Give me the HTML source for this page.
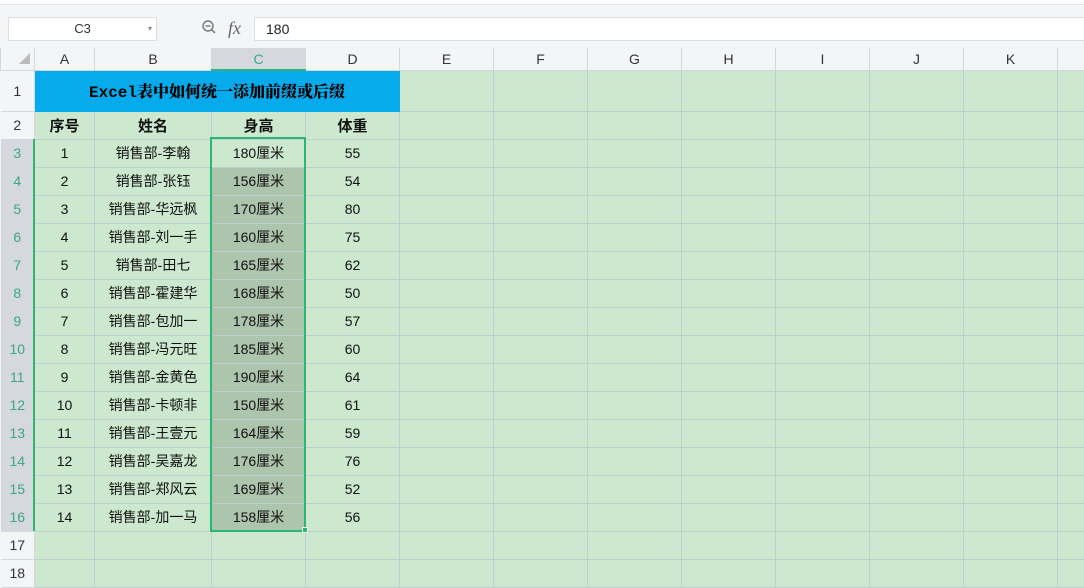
<!DOCTYPE html>
<html><head><meta charset="utf-8"><style>
*{margin:0;padding:0;box-sizing:border-box}
body{width:1084px;height:570px;overflow:hidden;background:#f4f5f7;font-family:"Liberation Sans","Noto Sans CJK SC",sans-serif;position:relative}
.topbar{position:absolute;left:0;top:0;width:1084px;height:5px;background:#fff;border-bottom:1px solid #e4e6ea}
.namebox{position:absolute;left:8px;top:17px;width:149px;height:24px;background:#fff;border:1px solid #dcdfe3;font-size:13px;color:#333;text-align:center;line-height:22px}
.namebox span{position:absolute;right:4px;top:0;font-size:8px;color:#888}
.fx{position:absolute;left:228px;top:18px;font-family:"Liberation Serif",serif;font-style:italic;font-size:18px;color:#666}
.mag{position:absolute;left:202px;top:20px;width:14px;height:14px}
.fbox{position:absolute;left:254px;top:17px;width:840px;height:24px;background:#fff;border:1px solid #dcdfe3;font-size:14px;line-height:22px;padding-left:11px;color:#222}
table{position:absolute;left:0;top:48px;border-collapse:collapse;table-layout:fixed;width:1100px}
td{border:1px solid #bdcfd0;text-align:center;font-size:14px;color:#111;overflow:hidden;white-space:nowrap;background:#cce8cf;height:28px;padding:0}
tr.h td{background:#f4f5f7;color:#333;height:22px;border-color:#d4d7dc;border-top:none;font-size:14px}
td.rh{background:#f4f5f7;color:#333;border-color:#d4d7dc;border-left:none;font-size:14px}
td.rs{background:#d5d8de;color:#3aa87a}
tr.h td.cs{background:#d5d8de;color:#3aa87a;border-bottom:2px solid #2fb37a}
td.t{background:#07abeb;border-color:#07abeb;font-family:"Liberation Mono","Noto Serif CJK SC",serif;font-weight:900;font-size:16px;height:41px;color:#000}
td.b{font-weight:bold;font-size:15px;font-family:"Liberation Sans","Noto Sans CJK SC",sans-serif}
td.s{background:#adc4ad}
.sel{position:absolute;left:210px;top:137px;width:96px;height:395px;border:2px solid #2ab673}
.hd{position:absolute;left:302px;top:527px;width:6px;height:6px;background:#2ab673;border:1px solid #fff}
.lb{position:absolute;left:33px;top:139px;width:2px;height:392px;background:#2ab673}
</style></head><body>
<div class="topbar"></div>
<div class="namebox">C3<span>▾</span></div>
<svg class="mag" viewBox="0 0 14 14"><circle cx="6" cy="6" r="5" fill="none" stroke="#777" stroke-width="1.4"/><line x1="3.5" y1="6" x2="8.5" y2="6" stroke="#777" stroke-width="1.4"/><line x1="9.6" y1="9.6" x2="13" y2="13" stroke="#777" stroke-width="1.5"/></svg>
<div class="fx">fx</div>
<div class="fbox">180</div>
<table>
<colgroup><col style="width:34px"><col style="width:60px"><col style="width:117px"><col style="width:94px"><col style="width:94px"><col style="width:94px"><col style="width:94px"><col style="width:94px"><col style="width:94px"><col style="width:94px"><col style="width:94px"><col style="width:94px"><col style="width:43px"></colgroup>
<tr class="h"><td style="position:relative"><svg width="14" height="12" style="position:absolute;left:16px;top:5px"><polygon points="13,0 13,11 2,11" fill="#bbb"/></svg></td><td>A</td><td>B</td><td class="cs">C</td><td>D</td><td>E</td><td>F</td><td>G</td><td>H</td><td>I</td><td>J</td><td>K</td><td></td></tr>
<tr><td class="rh">1</td><td class="t" colspan="4">Excel表中如何统一添加前缀或后缀</td><td></td><td></td><td></td><td></td><td></td><td></td><td></td><td></td></tr>
<tr><td class="rh">2</td><td class="b">序号</td><td class="b">姓名</td><td class="b">身高</td><td class="b">体重</td><td></td><td></td><td></td><td></td><td></td><td></td><td></td><td></td></tr>
<tr><td class="rh rs">3</td><td>1</td><td>销售部-李翰</td><td>180厘米</td><td>55</td><td></td><td></td><td></td><td></td><td></td><td></td><td></td><td></td></tr>
<tr><td class="rh rs">4</td><td>2</td><td>销售部-张钰</td><td class="s">156厘米</td><td>54</td><td></td><td></td><td></td><td></td><td></td><td></td><td></td><td></td></tr>
<tr><td class="rh rs">5</td><td>3</td><td>销售部-华远枫</td><td class="s">170厘米</td><td>80</td><td></td><td></td><td></td><td></td><td></td><td></td><td></td><td></td></tr>
<tr><td class="rh rs">6</td><td>4</td><td>销售部-刘一手</td><td class="s">160厘米</td><td>75</td><td></td><td></td><td></td><td></td><td></td><td></td><td></td><td></td></tr>
<tr><td class="rh rs">7</td><td>5</td><td>销售部-田七</td><td class="s">165厘米</td><td>62</td><td></td><td></td><td></td><td></td><td></td><td></td><td></td><td></td></tr>
<tr><td class="rh rs">8</td><td>6</td><td>销售部-霍建华</td><td class="s">168厘米</td><td>50</td><td></td><td></td><td></td><td></td><td></td><td></td><td></td><td></td></tr>
<tr><td class="rh rs">9</td><td>7</td><td>销售部-包加一</td><td class="s">178厘米</td><td>57</td><td></td><td></td><td></td><td></td><td></td><td></td><td></td><td></td></tr>
<tr><td class="rh rs">10</td><td>8</td><td>销售部-冯元旺</td><td class="s">185厘米</td><td>60</td><td></td><td></td><td></td><td></td><td></td><td></td><td></td><td></td></tr>
<tr><td class="rh rs">11</td><td>9</td><td>销售部-金黄色</td><td class="s">190厘米</td><td>64</td><td></td><td></td><td></td><td></td><td></td><td></td><td></td><td></td></tr>
<tr><td class="rh rs">12</td><td>10</td><td>销售部-卡顿非</td><td class="s">150厘米</td><td>61</td><td></td><td></td><td></td><td></td><td></td><td></td><td></td><td></td></tr>
<tr><td class="rh rs">13</td><td>11</td><td>销售部-王壹元</td><td class="s">164厘米</td><td>59</td><td></td><td></td><td></td><td></td><td></td><td></td><td></td><td></td></tr>
<tr><td class="rh rs">14</td><td>12</td><td>销售部-吴嘉龙</td><td class="s">176厘米</td><td>76</td><td></td><td></td><td></td><td></td><td></td><td></td><td></td><td></td></tr>
<tr><td class="rh rs">15</td><td>13</td><td>销售部-郑风云</td><td class="s">169厘米</td><td>52</td><td></td><td></td><td></td><td></td><td></td><td></td><td></td><td></td></tr>
<tr><td class="rh rs">16</td><td>14</td><td>销售部-加一马</td><td class="s">158厘米</td><td>56</td><td></td><td></td><td></td><td></td><td></td><td></td><td></td><td></td></tr>
<tr><td class="rh">17</td><td></td><td></td><td></td><td></td><td></td><td></td><td></td><td></td><td></td><td></td><td></td><td></td></tr>
<tr><td class="rh">18</td><td></td><td></td><td></td><td></td><td></td><td></td><td></td><td></td><td></td><td></td><td></td><td></td></tr>
</table>
<div class="lb"></div>
<div class="sel"></div>
<div class="hd"></div>
</body></html>
